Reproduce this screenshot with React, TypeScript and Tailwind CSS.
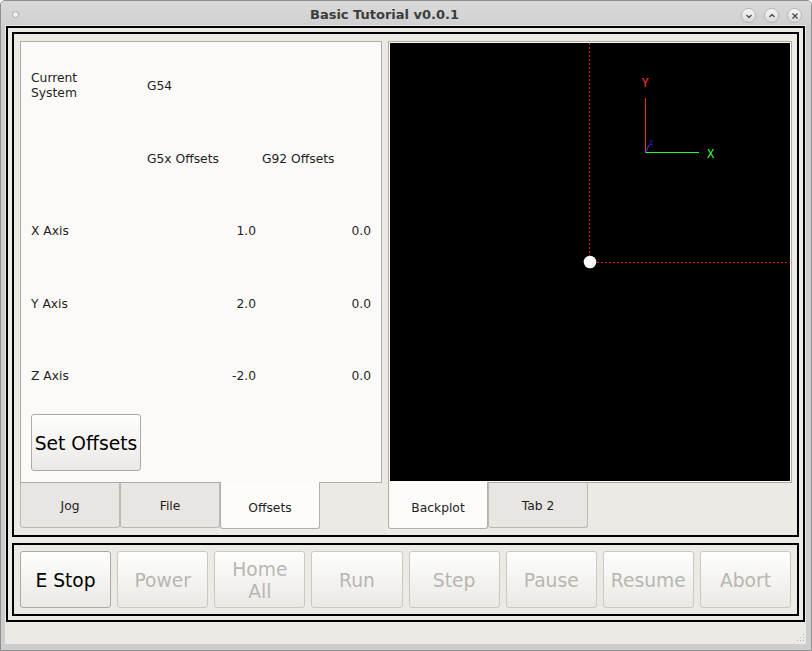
import type { ReactNode } from "react";
import clsx from "clsx";

const rows = [
  { label: "X Axis", g5x: "1.0", g92: "0.0" },
  { label: "Y Axis", g5x: "2.0", g92: "0.0" },
  { label: "Z Axis", g5x: "-2.0", g92: "0.0" },
];

const controls = [
  { label: "E Stop", enabled: true },
  { label: "Power" },
  { label: "Home\nAll" },
  { label: "Run" },
  { label: "Step" },
  { label: "Pause" },
  { label: "Resume" },
  { label: "Abort" },
];

// dash segments for the backplot guide lines
const vDashes = Array.from({ length: 54 }, (_, i) => i * 4);
const hDashes = Array.from({ length: 49 }, (_, i) => 207 + i * 4);

function QtButton({
  children,
  enabled,
  className,
}: {
  children: ReactNode;
  enabled?: boolean;
  className?: string;
}) {
  return (
    <button
      className={clsx(
        "flex items-center justify-center whitespace-pre-line rounded-[3px] border bg-linear-to-b from-[#fefefd] to-[#ebe9e5] pt-[2px] text-center text-[18.7px] leading-[22px]",
        enabled ? "border-[#aca8a3] text-black" : "border-[#cbc8c3] text-[#b8b6b3]",
        className
      )}
    >
      {children}
    </button>
  );
}

function Tab({ label, active }: { label: string; active?: boolean }) {
  return (
    <div
      className={clsx(
        "flex w-[100px] items-center justify-center rounded-b-[3px] border border-t-0 text-[12.3px] text-[#1e1e1e]",
        active
          ? "-mt-px h-[47px] border-[#b3afaa] bg-[#fdfcfb] pt-[6px]"
          : "h-[45px] border-[#bcb8b3] bg-[#e8e5e2] pt-[3px]"
      )}
    >
      {label}
    </div>
  );
}

function TitleCircle({ children }: { children: ReactNode }) {
  return (
    <div className="flex h-[15px] w-[15px] items-center justify-center rounded-full border border-[#b4b4b4] bg-linear-to-b from-[#f7f7f7] to-[#dadada]">
      {children}
    </div>
  );
}

function Backplot() {
  return (
    <svg viewBox="0 0 400 438" width={400} height={438} shapeRendering="crispEdges" className="block">
      {vDashes.map((y) => (
        <rect key={`v${y}`} x="199" y={y} width="1" height="2" fill="#e81a1a" />
      ))}
      {hDashes.map((x) => (
        <rect key={`h${x}`} x={x} y="219" width="2" height="1" fill="#e81a1a" />
      ))}
      <circle cx="200" cy="219" r="6.3" fill="#ffffff" shapeRendering="auto" />
      <rect x="255" y="55" width="1" height="55" fill="#ff2424" />
      <rect x="255" y="109" width="54" height="1" fill="#24ff24" />
      <line x1="255.5" y1="109.5" x2="259" y2="102" stroke="#3a3aff" shapeRendering="auto" />
      <text x="255" y="44" fill="#ff3333" fontSize="12" textAnchor="middle" fontFamily="'DejaVu Sans Mono', monospace">
        Y
      </text>
      <text x="320.5" y="114.5" fill="#33ff33" fontSize="12" textAnchor="middle" fontFamily="'DejaVu Sans Mono', monospace">
        X
      </text>
      <text x="261" y="102" fill="#3a3aff" fontSize="6" textAnchor="middle" fontFamily="'DejaVu Sans Mono', monospace">
        Z
      </text>
    </svg>
  );
}

export default function App() {
  return (
    <div className="flex h-[651px] w-[812px] flex-col overflow-hidden rounded-t-[5px] border border-[#8e8e8e] bg-[#cdcdcd] font-['DejaVu_Sans',sans-serif]">
      {/* window title bar */}
      <div className="flex h-[24px] shrink-0 items-center bg-linear-to-b from-[#d9d9d9] to-[#d0d0d0]">
        <div className="w-[27px] pt-[2px]">
          <div className="ml-[11px] h-[7px] w-[7px] rounded-full border border-[#a8a8a8] bg-[#f2f2f2]" />
        </div>
        <div className="flex-1 pt-[3px] text-center text-[13px] font-bold text-[#3c3c3c]">
          Basic Tutorial v0.0.1
        </div>
        <div className="flex items-center gap-[8px] pr-[9px] pt-[5px]">
          <TitleCircle>
            <svg viewBox="0 0 8 8" className="h-[8px] w-[8px]">
              <path d="M1.5 3 L4 5.5 L6.5 3" fill="none" stroke="#4a4a4a" strokeWidth="1.3" />
            </svg>
          </TitleCircle>
          <TitleCircle>
            <svg viewBox="0 0 8 8" className="h-[8px] w-[8px]">
              <path d="M1.5 5 L4 2.5 L6.5 5" fill="none" stroke="#4a4a4a" strokeWidth="1.3" />
            </svg>
          </TitleCircle>
          <TitleCircle>
            <svg viewBox="0 0 8 8" className="h-[8px] w-[8px]">
              <path d="M1.5 1.5 L6.5 6.5 M6.5 1.5 L1.5 6.5" fill="none" stroke="#4a4a4a" strokeWidth="1.3" />
            </svg>
          </TitleCircle>
        </div>
      </div>

      {/* client area */}
      <div className="mb-[6px] ml-[4px] mr-[5px] flex flex-1 flex-col bg-[#edeae6] text-[12.3px] text-[#1e1e1e]">
        <div className="mx-[1px] mt-[1px] flex h-[596px] flex-col gap-[6px] border-2 border-black p-[4px]">
          {/* top frame */}
          <div className="flex h-[505px] gap-[6px] border-2 border-black pb-[6px] pl-[6px] pr-[5px] pt-[7px]">
            <div className="flex w-[362px] flex-col">
              <div className="flex h-[442px] flex-col border border-[#aeaaa5] bg-[#fcfaf8] pl-[10px] pt-[8px]">
                <div className="flex h-[72.5px] items-center">
                  <div className="w-[116px] leading-[15px]">
                    Current
                    <br />
                    System
                  </div>
                  <div>G54</div>
                </div>
                <div className="flex h-[72.5px] items-center">
                  <div className="w-[116px]" />
                  <div className="w-[109px]">G5x Offsets</div>
                  <div className="ml-[6px] w-[109px]">G92 Offsets</div>
                </div>
                {rows.map((r) => (
                  <div key={r.label} className="flex h-[72.5px] items-center">
                    <div className="w-[116px]">{r.label}</div>
                    <div className="w-[109px] text-right">{r.g5x}</div>
                    <div className="ml-[6px] w-[109px] text-right">{r.g92}</div>
                  </div>
                ))}
                <QtButton enabled className="mt-[1.5px] h-[57px] w-[110px]">
                  Set Offsets
                </QtButton>
              </div>
              <div className="flex">
                <Tab label="Jog" />
                <Tab label="File" />
                <Tab label="Offsets" active />
              </div>
            </div>

            <div className="flex flex-1 flex-col">
              <div className="h-[442px] border border-[#aeaaa5] bg-[#fcfaf8] p-[1px]">
                <div className="h-full w-full overflow-hidden bg-black">
                  <Backplot />
                </div>
              </div>
              <div className="flex">
                <Tab label="Backplot" active />
                <Tab label="Tab 2" />
              </div>
            </div>
          </div>

          {/* bottom control frame */}
          <div className="flex h-[73px] gap-[6px] border-2 border-black p-[6px]">
            {controls.map((c) => (
              <QtButton key={c.label} enabled={c.enabled} className="h-[57px] flex-1">
                {c.label}
              </QtButton>
            ))}
          </div>
        </div>

        {/* status bar with resize grip */}
        <div className="flex flex-1 items-end justify-end pb-[2px] pr-[1px]">
          <svg viewBox="0 0 10 10" className="h-[10px] w-[10px]">
            {[
              [8, 2],
              [5, 5],
              [8, 5],
              [2, 8],
              [5, 8],
              [8, 8],
            ].map(([x, y]) => (
              <rect key={`${x}-${y}`} x={x} y={y} width="1" height="1" fill="#b0ada8" />
            ))}
          </svg>
        </div>
      </div>
    </div>
  );
}
